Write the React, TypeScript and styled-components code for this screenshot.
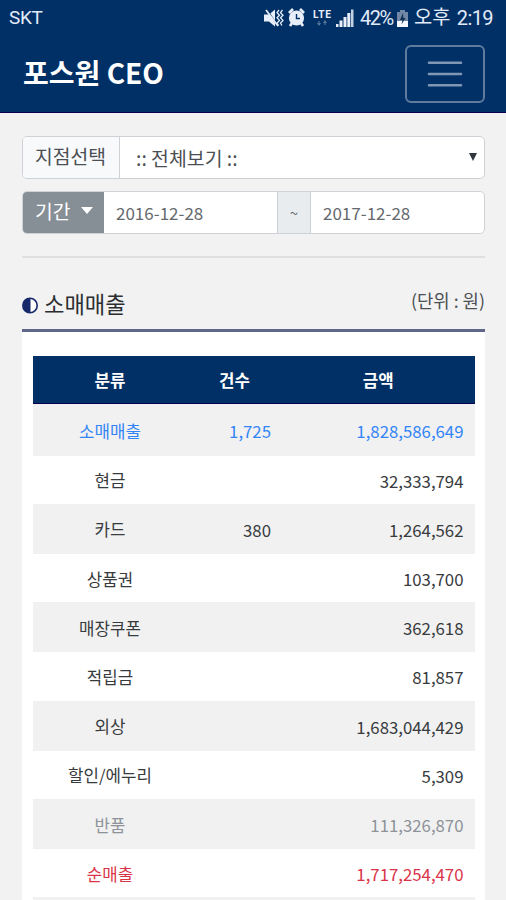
import React from "react";
import styled, { createGlobalStyle } from "styled-components";

const GlobalStyle = createGlobalStyle`
  * { box-sizing: border-box; }
  html, body { margin: 0; background: #f2f2f2; }
  body {
    color: #2b2e31;
    font-family: "Noto Sans CJK KR", sans-serif;
    font-size: 16.8px;
    overflow: hidden;
  }
`;

const Page = styled.div`
  width: 506px;
  height: 900px;
  overflow: hidden;
  background: #f2f2f2;
`;

const Header = styled.header`
  height: 113px;
  background: #003066;
  border-bottom: 1px solid #0b0050;
  color: #fff;
`;

const StatusBar = styled.div`
  height: 36px;
  padding: 0 13px 0 9px;
  display: flex;
  align-items: center;
  color: #e3ebf8;
  font: 19px/36px Roboto, "Noto Sans CJK KR", sans-serif;
  white-space: nowrap;
`;

const Carrier = styled.span`
  flex: 1;
  letter-spacing: -0.4px;
`;

const StatusIcons = styled.svg`
  width: 95px;
  height: 36px;
  margin-right: 3px;
`;

const Percent = styled.span`
  width: 34px;
  font-size: 20px;
  letter-spacing: -1.5px;
`;

const Battery = styled.svg`
  width: 11px;
  height: 36px;
  margin: 0 6px 0 3px;
`;

const Clock = styled.span`
  width: 79px;
  display: flex;
  justify-content: space-between;
  font-size: 20px;
`;

const Meridiem = styled.span`
  font-size: 19.8px;
`;

const Time = styled.span`
  letter-spacing: -0.6px;
`;

const NavBar = styled.nav`
  height: 76px;
  padding: 0 21px 0 23px;
  display: flex;
  align-items: center;
  justify-content: space-between;
`;

const Brand = styled.h1`
  margin: -4px 0 0;
  font-size: 28px;
  font-weight: 700;
  line-height: 40px;
`;

const MenuButton = styled.button`
  width: 80px;
  height: 58px;
  margin-top: -1px;
  padding: 0;
  display: grid;
  place-items: center;
  background: transparent;
  border: 2px solid #5f7b9e;
  border-radius: 6px;
`;

const Content = styled.main`
  padding: 23px 21px 0 22px;
`;

const FieldGroup = styled.div`
  height: 43px;
  margin-bottom: 12px;
  display: flex;
  overflow: hidden;
  background: #fff;
  border: 1px solid #ced2d6;
  border-radius: 5px;
`;

const BranchLabel = styled.div`
  width: 97px;
  padding-left: 12px;
  background: #f8f9fb;
  border-right: 1px solid #ced2d6;
  color: #4b4f53;
  font-size: 19.3px;
  line-height: 39px;
`;

const BranchSelect = styled.div`
  flex: 1;
  padding: 0 7px 0 16px;
  display: flex;
  align-items: center;
  justify-content: space-between;
  color: #4b4f53;
  font-size: 19.4px;
  line-height: 41px;

  svg { margin-top: -2px; }
`;

const PeriodButton = styled.div`
  width: 82px;
  margin: -1px 0 -1px -1px;
  padding: 0 11px 4px 13px;
  display: flex;
  align-items: center;
  justify-content: space-between;
  background: #868e96;
  color: #fff;
  font-size: 19.3px;
`;

const DateField = styled.div<{ $width: number }>`
  width: ${({ $width }) => $width}px;
  padding-left: 12px;
  color: #65696d;
  font-size: 17px;
  line-height: 41px;
`;

const Tilde = styled.div`
  width: 34px;
  background: #e9ecef;
  border: solid #ced2d6;
  border-width: 0 1px;
  color: #65696d;
  font-size: 15px;
  line-height: 42px;
  text-align: center;
`;

const Divider = styled.hr`
  height: 2px;
  margin: 22px 0 0;
  border: 0;
  background: #dedfdf;
`;

const SectionHeader = styled.div`
  height: 74px;
  display: flex;
  align-items: center;
  justify-content: space-between;
  border-bottom: 3px solid #60668a;
`;

const SectionTitle = styled.h2`
  margin: 19px 0 0;
  display: flex;
  align-items: center;
  gap: 5px;
  font-size: 22.2px;
  font-weight: 400;
  line-height: 32px;

  svg { margin-top: 5px; }
`;

const Unit = styled.span`
  margin-top: 13px;
  font-size: 17.8px;
  color: #4b4f53;
`;

const Panel = styled.section`
  height: 600px;
  padding: 24px 11px 0;
  background: #fff;
`;

const SalesTable = styled.table`
  width: 441.5px;
  border-collapse: separate;
  border-spacing: 0;
  table-layout: fixed;
`;

const HeadCell = styled.th<{ $width: number }>`
  width: ${({ $width }) => $width}px;
  height: 48px;
  padding: 0;
  background: #003066;
  border-bottom: 1px solid #0b0050;
  color: #fff;
  font-size: 16.8px;
  font-weight: 700;
  line-height: 24px;
`;

const Cell = styled.td<{ $numeric?: boolean }>`
  height: 49.2px;
  padding: ${({ $numeric }) => ($numeric ? "2px 11px 0" : "1px 0 0")};
  border-top: 1.6px solid #eef0f1;
  line-height: 24px;
  text-align: ${({ $numeric }) => ($numeric ? "right" : "center")};
`;

const Row = styled.tr<{ $color?: string }>`
  color: ${({ $color }) => $color ?? "#383b3e"};

  &:nth-child(odd) { background: #f1f1f1; }
  &:first-child ${Cell} { height: 50.6px; padding-top: 3px; }
`;

const rows = [
  { name: "소매매출", count: "1,725", amount: "1,828,586,649", color: "#3385f7" },
  { name: "현금", count: "", amount: "32,333,794" },
  { name: "카드", count: "380", amount: "1,264,562" },
  { name: "상품권", count: "", amount: "103,700" },
  { name: "매장쿠폰", count: "", amount: "362,618" },
  { name: "적립금", count: "", amount: "81,857" },
  { name: "외상", count: "", amount: "1,683,044,429" },
  { name: "할인/에누리", count: "", amount: "5,309" },
  { name: "반품", count: "", amount: "111,326,870", color: "#8d9399" },
  { name: "순매출", count: "", amount: "1,717,254,470", color: "#d93448" },
  { name: "", count: "", amount: "" },
];

export default function App() {
  return (
    <Page>
      <GlobalStyle />
      <Header>
        <StatusBar>
          <Carrier>SKT</Carrier>
          <StatusIcons viewBox="0 0 95 36" fill="#e9effa">
            <path d="M2 14.5h5l6-5v17l-6-5H2z" />
            <path d="M5.5 10l10 16" stroke="#003066" strokeWidth="1.4" />
            <path d="M4 10l12 16" fill="none" stroke="#e9effa" strokeWidth="1.7" />
            <path d="M17 10l-2 2.6 2.5 2.6-2.5 2.6 2.5 2.6-2.5 2.6 1.5 2.5M20.5 10l-2 2.6 2.5 2.6-2.5 2.6 2.5 2.6-2.5 2.6 1.5 2.5" fill="none" stroke="#e9effa" strokeWidth="1.3" />
            <circle cx="34.5" cy="18" r="7.6" />
            <path d="M27 13l4-4M38 9l4 4M30 23l-2 3M39 23l2 3" stroke="#e9effa" strokeWidth="2.7" />
            <path d="M34.5 14v4.5h3.5" fill="none" stroke="#003066" strokeWidth="1.4" />
            <text x="51" y="18" fontFamily="Roboto, sans-serif" fontSize="10.2" fontWeight="700" textLength="18">LTE</text>
            <path d="M57 21v4M55.5 23l1.5 2 1.5-2M63 25v-4M61.5 23l1.5-2 1.5 2" fill="none" stroke="#58799f" strokeWidth="1.1" />
            <path d="M74 24h2.5v3H74zM77.5 20.5h3V27h-3zM81.5 17h3v10h-3zM85.3 13h3v14h-3z" />
            <path d="M89 9.5h2.5V27H89z" fill="#c3d0e2" />
          </StatusIcons>
          <Percent>42%</Percent>
          <Battery viewBox="0 0 11 36">
            <path d="M3 10h5v2h3v15H0V12h3z" fill="#7187a5" />
            <path d="M0 21h11v6H0z" fill="#f5f8ff" />
            <path d="M6 13l-3 7h2.5l-1 4.5 4-6.5H6.3z" fill="#102f54" />
          </Battery>
          <Clock>
            <Meridiem>오후</Meridiem>
            <Time>2:19</Time>
          </Clock>
        </StatusBar>
        <NavBar>
          <Brand>포스원 CEO</Brand>
          <MenuButton aria-label="메뉴">
            <svg width="36" height="28" viewBox="0 0 36 28">
              <path d="M2 2.8h32M2 14h32M2 25.2h32" stroke="#8097b4" strokeWidth="2.6" strokeLinecap="round" />
            </svg>
          </MenuButton>
        </NavBar>
      </Header>
      <Content>
        <FieldGroup>
          <BranchLabel>지점선택</BranchLabel>
          <BranchSelect>
            <span>:: 전체보기 ::</span>
            <svg width="8" height="8" viewBox="0 0 8 8"><path d="M0 0h8L4 8z" fill="#30363d" /></svg>
          </BranchSelect>
        </FieldGroup>
        <FieldGroup>
          <PeriodButton>
            기간
            <svg width="12" height="7" viewBox="0 0 12 7"><path d="M0 0h12L6 7z" fill="#fff" /></svg>
          </PeriodButton>
          <DateField $width={173}>2016-12-28</DateField>
          <Tilde>~</Tilde>
          <DateField $width={173}>2017-12-28</DateField>
        </FieldGroup>
        <Divider />
        <SectionHeader>
          <SectionTitle>
            <svg width="17" height="17" viewBox="0 0 17 17">
              <circle cx="8" cy="8.5" r="7.2" fill="#fff" stroke="#17296a" strokeWidth="1.6" />
              <path d="M8.5 1a7.5 7.5 0 0 0 0 15z" fill="#17296a" />
            </svg>
            소매매출
          </SectionTitle>
          <Unit>(단위 : 원)</Unit>
        </SectionHeader>
        <Panel>
          <SalesTable>
            <thead>
              <tr>
                <HeadCell $width={154}>분류</HeadCell>
                <HeadCell $width={95}>건수</HeadCell>
                <HeadCell $width={192.5}>금액</HeadCell>
              </tr>
            </thead>
            <tbody>
              {rows.map((row, index) => (
                <Row key={index} $color={row.color}>
                  <Cell>{row.name}</Cell>
                  <Cell $numeric>{row.count}</Cell>
                  <Cell $numeric>{row.amount}</Cell>
                </Row>
              ))}
            </tbody>
          </SalesTable>
        </Panel>
      </Content>
    </Page>
  );
}
